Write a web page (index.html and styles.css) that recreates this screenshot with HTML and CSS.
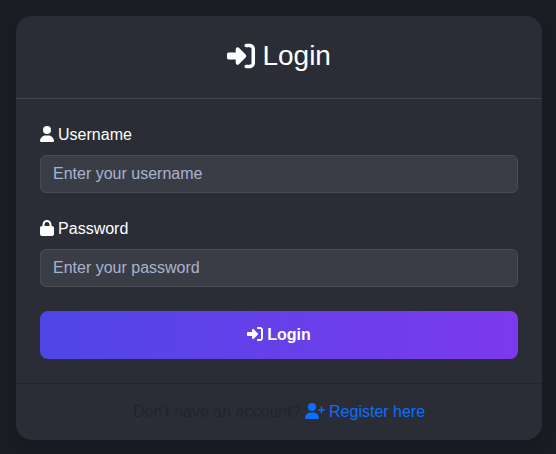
FILE: index.html
```html
<!DOCTYPE html>
<html lang="en">
<head>
<meta charset="utf-8">
<title>Login</title>
<link rel="stylesheet" href="styles.css">
</head>
<body>
<svg class="sprite" aria-hidden="true">
  <symbol id="enter" viewBox="0 0 512 512"><path d="M217.9 105.9L340.7 228.7c7.2 7.2 11.3 17.1 11.3 27.3s-4.1 20.1-11.3 27.3L217.9 406.1c-6.4 6.4-15 9.9-24 9.9c-18.7 0-33.9-15.2-33.9-33.9l0-62.1L32 320c-17.7 0-32-14.3-32-32l0-64c0-17.7 14.3-32 32-32l128 0 0-62.1c0-18.7 15.2-33.9 33.9-33.9c9 0 17.6 3.6 24 9.9zM352 416l64 0c17.7 0 32-14.3 32-32l0-256c0-17.7-14.3-32-32-32l-64 0c-17.7 0-32-14.3-32-32s14.3-32 32-32l64 0c53 0 96 43 96 96l0 256c0 53-43 96-96 96l-64 0c-17.7 0-32-14.3-32-32s14.3-32 32-32z"/></symbol>
</svg>
<main class="card">
  <header class="card-header">
    <h3 class="title"><svg class="icon" viewBox="0 0 512 512"><use href="#enter"/></svg> Login</h3>
  </header>
  <form class="card-body">
    <div class="field">
      <label class="label" for="username"><svg class="icon icon-narrow" viewBox="0 0 448 512"><path d="M224 256A128 128 0 1 0 224 0a128 128 0 1 0 0 256zm-45.7 48C79.8 304 0 383.8 0 482.3C0 498.7 13.3 512 29.7 512l388.6 0c16.4 0 29.7-13.3 29.7-29.7C448 383.8 368.2 304 269.7 304l-91.4 0z"/></svg> Username</label>
      <input class="input" id="username" type="text" placeholder="Enter your username">
    </div>
    <div class="field">
      <label class="label" for="password"><svg class="icon icon-narrow" viewBox="0 0 448 512"><path d="M144 144l0 48 160 0 0-48c0-44.2-35.8-80-80-80s-80 35.8-80 80zM80 192l0-48C80 64.5 144.5 0 224 0s144 64.5 144 144l0 48 16 0c35.3 0 64 28.7 64 64l0 192c0 35.3-28.7 64-64 64L64 512c-35.3 0-64-28.7-64-64L0 256c0-35.3 28.7-64 64-64l16 0z"/></svg> Password</label>
      <input class="input" id="password" type="password" placeholder="Enter your password">
    </div>
    <button class="submit" type="button"><svg class="icon" viewBox="0 0 512 512"><use href="#enter"/></svg> Login</button>
  </form>
  <footer class="card-footer">Don't have an account? <a class="link" href="#"><svg class="icon icon-wide" viewBox="0 0 640 512"><path d="M96 128a128 128 0 1 1 256 0A128 128 0 1 1 96 128zM0 482.3C0 383.8 79.8 304 178.3 304l91.4 0C368.2 304 448 383.8 448 482.3c0 16.4-13.3 29.7-29.7 29.7L29.7 512C13.3 512 0 498.7 0 482.3zM504 312l0-64-64 0c-13.3 0-24-10.7-24-24s10.7-24 24-24l64 0 0-64c0-13.3 10.7-24 24-24s24 10.7 24 24l0 64 64 0c13.3 0 24 10.7 24 24s-10.7 24-24 24l-64 0 0 64c0 13.3-10.7 24-24 24s-24-10.7-24-24z"/></svg> Register here</a></footer>
</main>
</body>
</html>
```
FILE: styles.css
```css
*, *::before, *::after { box-sizing: border-box; }
html { background: #1a1d24; }
body {
  margin: 0;
  padding: 16px 14px 14px 16px;
  font: 16px/1.5 "Liberation Sans", Arial, sans-serif;
  color: #212529;
  overflow: hidden;
}
.sprite { display: none; }
.card {
  background: #2b2d36;
  border-radius: 16px;
  box-shadow: 0 8px 16px rgba(0, 0, 0, 0.15);
}
.card-header {
  padding: 23.4px 24px 24.6px;
  border-bottom: 1px solid #40424a;
  text-align: center;
}
.title {
  height: 33.6px;
  margin: 0;
  color: #fff;
  font-size: 28px;
  font-weight: 400;
  line-height: 1.2;
}
.icon {
  width: 1em;
  height: 1em;
  margin-right: -0.4px;
  vertical-align: -0.125em;
  fill: currentColor;
}
.title .icon { vertical-align: -4.2px; }
.icon-narrow { width: 0.875em; }
.icon-wide { width: 1.25em; }
.card-body { padding: 24px; }
.field { margin-bottom: 24px; }
.label {
  display: block;
  margin-bottom: 8px;
  color: #fff;
}
.input {
  display: block;
  width: 100%;
  height: 38px;
  padding: 6px 12px;
  border: 1px solid #4a4c55;
  border-radius: 6px;
  background: #3b3d46;
  color: #fff;
  font: inherit;
}
.input::placeholder { color: #a8b3cf; opacity: 1; }
.submit {
  display: block;
  width: 100%;
  height: 48px;
  padding: 0;
  border: 0;
  border-radius: 8px;
  background: linear-gradient(90deg, #4f46e5, #7c3aed);
  color: #fff;
  font: inherit;
  font-weight: 700;
}
.card-footer {
  padding: 16px;
  border-top: 1px solid #22242b;
  text-align: center;
}
.link { color: #0d6efd; text-decoration: none; }
```
